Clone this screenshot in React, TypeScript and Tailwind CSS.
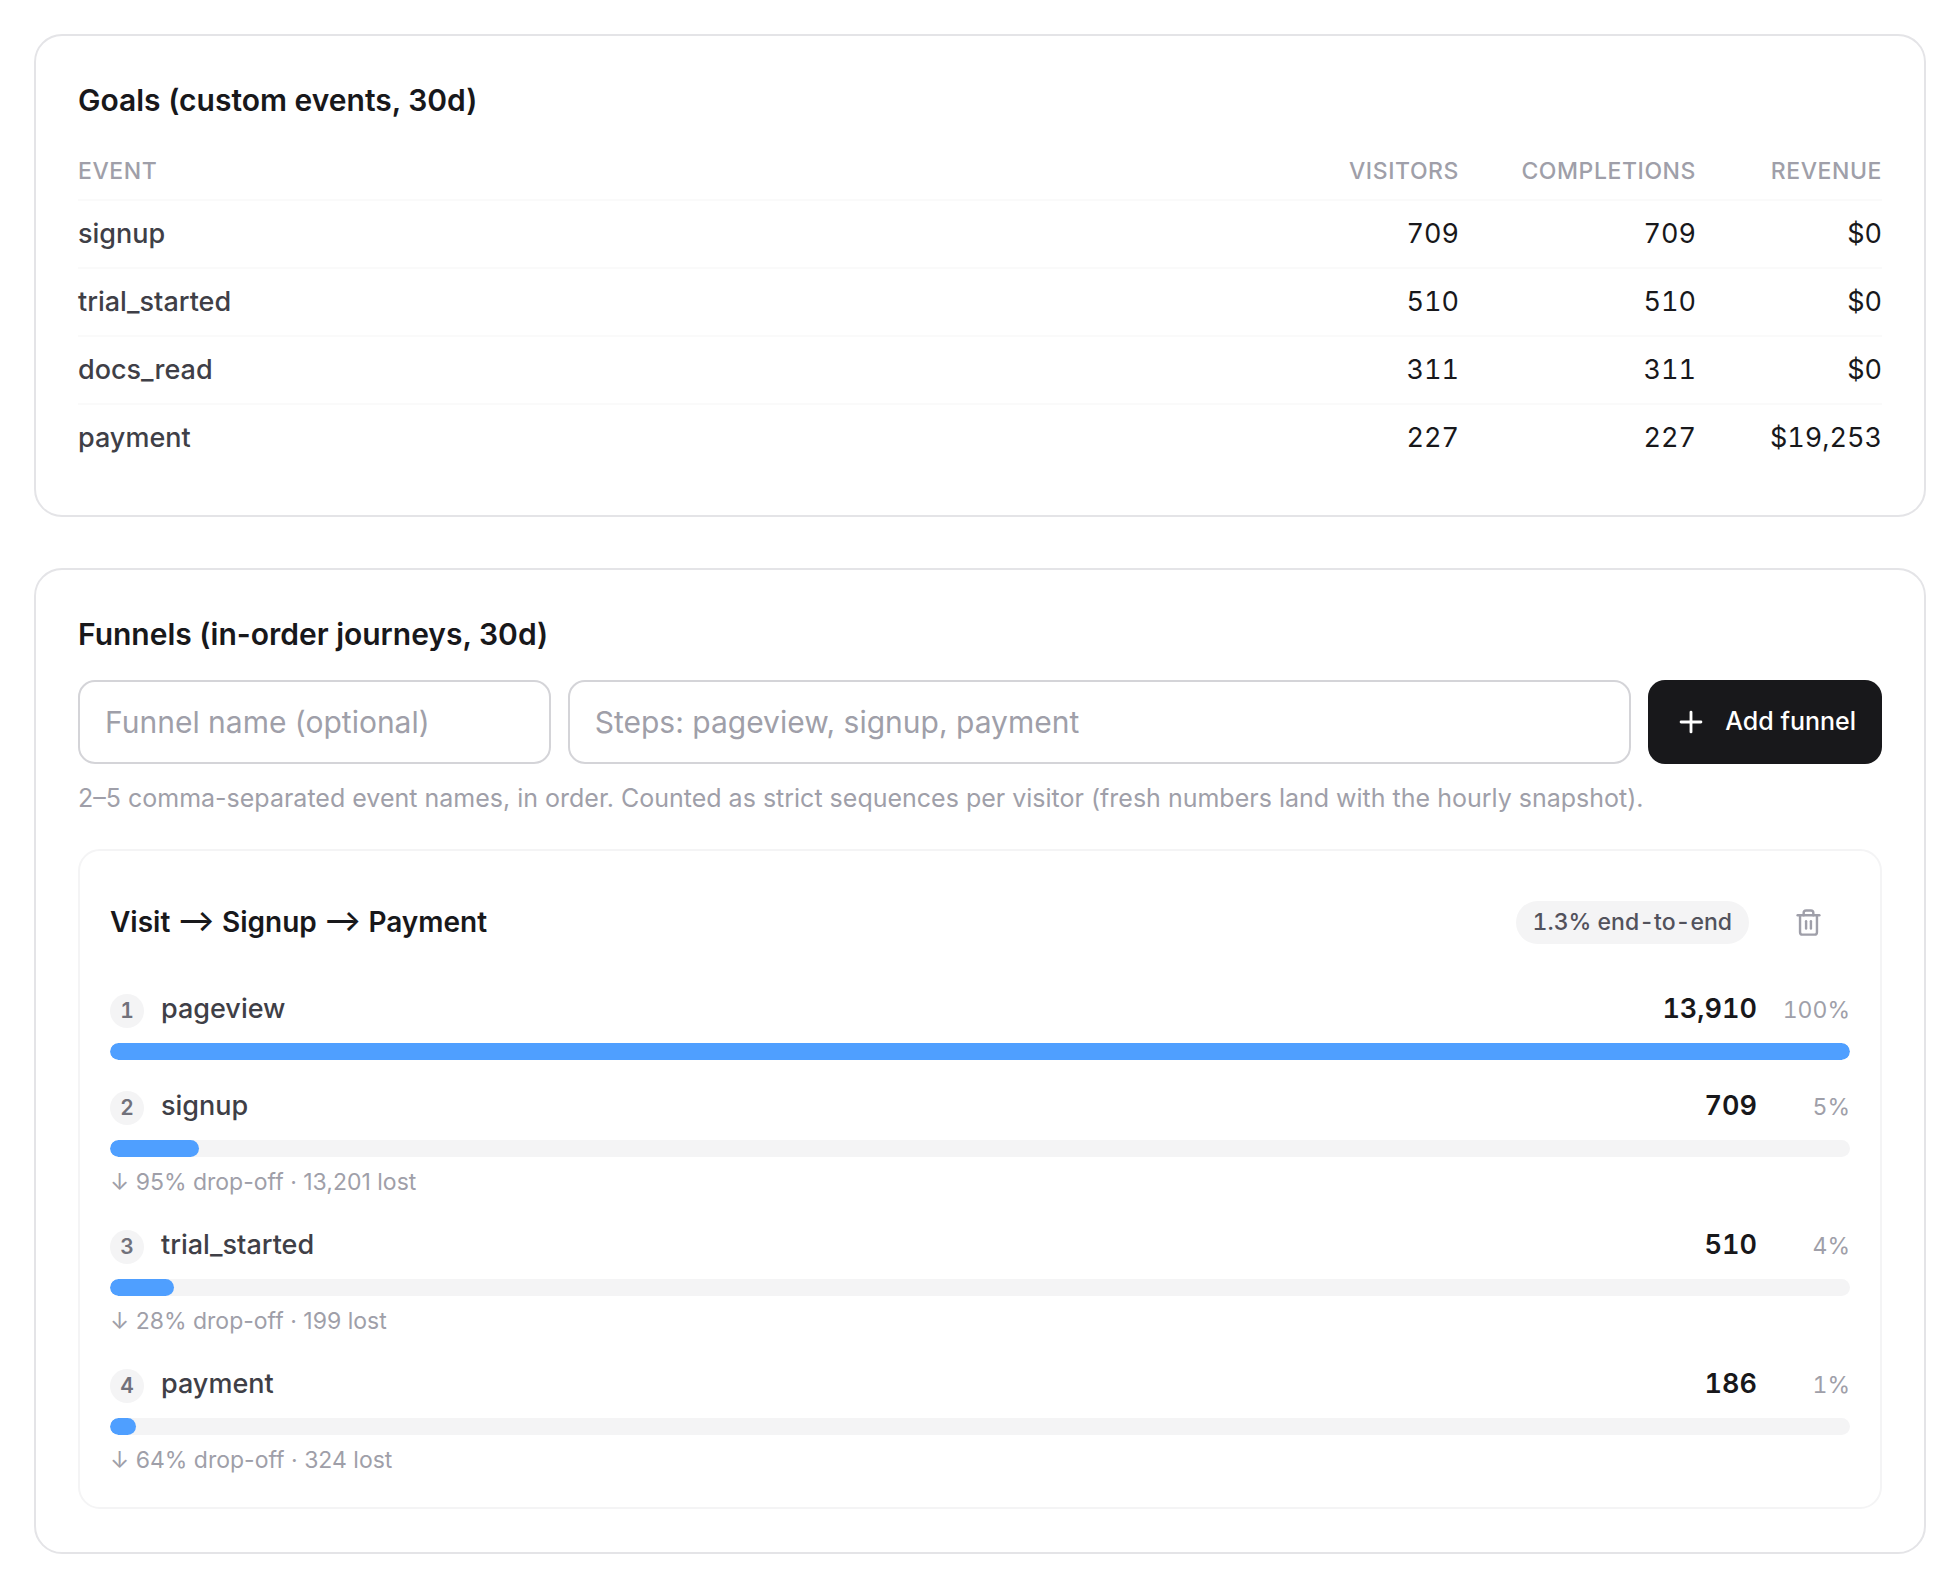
import { useState } from "react";
import { Plus, Trash2 } from "lucide-react";

const goals = [
  { event: "signup", visitors: "709", completions: "709", revenue: "$0" },
  { event: "trial_started", visitors: "510", completions: "510", revenue: "$0" },
  { event: "docs_read", visitors: "311", completions: "311", revenue: "$0" },
  { event: "payment", visitors: "227", completions: "227", revenue: "$19,253" },
];

type Step = {
  name: string;
  count: number;
  percent: number;
  drop?: { percent: number; lost: number };
};

const steps: Step[] = [
  { name: "pageview", count: 13910, percent: 100 },
  { name: "signup", count: 709, percent: 5, drop: { percent: 95, lost: 13201 } },
  { name: "trial_started", count: 510, percent: 4, drop: { percent: 28, lost: 199 } },
  { name: "payment", count: 186, percent: 1, drop: { percent: 64, lost: 324 } },
];

// keeps the smallest bars visible
const MIN_BAR_PERCENT = 1.5;

const format = (n: number) => n.toLocaleString("en-US");

function GoalsCard() {
  return (
    <section className="rounded-[28px] border-2 border-zinc-200 px-[42px] pt-[44px] pb-[43px]">
      <h2 className="text-[30px] leading-[40px] font-semibold text-zinc-900">
        Goals (custom events, 30d)
      </h2>
      <table className="mt-6 w-full table-fixed text-right text-[27px] tabular-nums">
        <thead>
          <tr className="h-[56px] border-b-2 border-zinc-50 text-[23px] tracking-wide text-zinc-400 uppercase">
            <th scope="col" className="text-left font-medium">Event</th>
            <th scope="col" className="w-[200px] font-medium">Visitors</th>
            <th scope="col" className="w-[237px] font-medium">Completions</th>
            <th scope="col" className="w-[186px] font-medium">Revenue</th>
          </tr>
        </thead>
        <tbody className="divide-y-2 divide-zinc-50">
          {goals.map((goal) => (
            <tr key={goal.event} className="h-[68px] text-zinc-900">
              <th scope="row" className="text-left font-medium text-zinc-700">
                {goal.event}
              </th>
              <td>{goal.visitors}</td>
              <td>{goal.completions}</td>
              <td>{goal.revenue}</td>
            </tr>
          ))}
        </tbody>
      </table>
    </section>
  );
}

function FunnelStep({ step, index }: { step: Step; index: number }) {
  const total = steps[0].count;
  const width = Math.max((step.count / total) * 100, MIN_BAR_PERCENT);

  return (
    <li>
      <div className="flex h-[40px] items-baseline leading-[40px]">
        <span className="flex size-[34px] items-center justify-center rounded-full bg-zinc-100 text-[21px] leading-none font-semibold text-zinc-500 tabular-nums">
          {index + 1}
        </span>
        <span className="ml-[17px] text-[27px] font-medium text-zinc-700">{step.name}</span>
        <span className="ml-auto text-[27px] font-semibold text-zinc-900 tabular-nums">
          {format(step.count)}
        </span>
        <span className="w-[93px] text-right text-[23px] text-zinc-400 tabular-nums">
          {step.percent}%
        </span>
      </div>
      <div className="mt-[14px] h-[17px] overflow-hidden rounded-full bg-zinc-100">
        <div className="h-full rounded-full bg-[#4f9fff]" style={{ width: `${width}%` }} />
      </div>
      {step.drop ? (
        <p className="mt-2 text-[23px] leading-[34px] text-zinc-400">
          ↓ {step.drop.percent}% drop-off · {format(step.drop.lost)} lost
        </p>
      ) : null}
    </li>
  );
}

function FunnelsCard() {
  const [name, setName] = useState("");
  const [sequence, setSequence] = useState("");

  return (
    <section className="rounded-[28px] border-2 border-zinc-200 px-[42px] pt-[44px] pb-[43px]">
      <h2 className="text-[30px] leading-[40px] font-semibold text-zinc-900">
        Funnels (in-order journeys, 30d)
      </h2>
      <form
        className="mt-[26px] grid grid-cols-[4fr_9fr_auto] gap-[17px]"
        onSubmit={(e) => e.preventDefault()}
      >
        <input
          type="text"
          aria-label="Funnel name"
          placeholder="Funnel name (optional)"
          value={name}
          onChange={(e) => setName(e.target.value)}
          className="h-[84px] w-full min-w-0 rounded-[17px] border-2 border-zinc-300 px-[25px] text-[30px] text-zinc-900 outline-none placeholder:text-zinc-400 focus:border-zinc-500"
        />
        <input
          type="text"
          aria-label="Funnel steps"
          placeholder="Steps: pageview, signup, payment"
          value={sequence}
          onChange={(e) => setSequence(e.target.value)}
          className="h-[84px] w-full min-w-0 rounded-[17px] border-2 border-zinc-300 px-[25px] text-[30px] text-zinc-900 outline-none placeholder:text-zinc-400 focus:border-zinc-500"
        />
        <button
          type="submit"
          className="flex h-[84px] items-center gap-[17px] rounded-[17px] bg-zinc-900 px-[26px] text-[25px] font-medium text-white hover:bg-zinc-800"
        >
          <Plus className="size-[34px]" strokeWidth={2} aria-hidden />
          Add funnel
        </button>
      </form>
      <p className="mt-4 text-[25px] leading-[36px] text-zinc-400">
        2–5 comma-separated event names, in order. Counted as strict sequences per visitor
        (fresh numbers land with the hourly snapshot).
      </p>

      <article className="mt-[33px] rounded-[22px] border-2 border-zinc-100 px-[30px] pt-[29px] pb-[30px]">
        <header className="flex h-[84px] items-center">
          <h3 className="text-[28px] font-semibold text-zinc-900">Visit ⟶ Signup ⟶ Payment</h3>
          <span className="ml-auto flex h-[43px] items-center rounded-full bg-zinc-100 px-[17px] text-[23px] font-medium text-zinc-600 tabular-nums">
            1.3% end-to-end
          </span>
          <button
            type="button"
            aria-label="Delete funnel"
            className="ml-[17px] flex size-[84px] items-center justify-center text-zinc-400 hover:text-zinc-600"
          >
            <Trash2 className="size-[29px]" strokeWidth={2} aria-hidden />
          </button>
        </header>
        <ol className="mt-[25px] flex flex-col gap-[26px]">
          {steps.map((step, i) => (
            <FunnelStep key={step.name} step={step} index={i} />
          ))}
        </ol>
      </article>
    </section>
  );
}

export default function App() {
  return (
    <main className="flex min-h-screen flex-col gap-[51px] bg-white p-[34px] font-['Inter',sans-serif]">
      <GoalsCard />
      <FunnelsCard />
    </main>
  );
}
